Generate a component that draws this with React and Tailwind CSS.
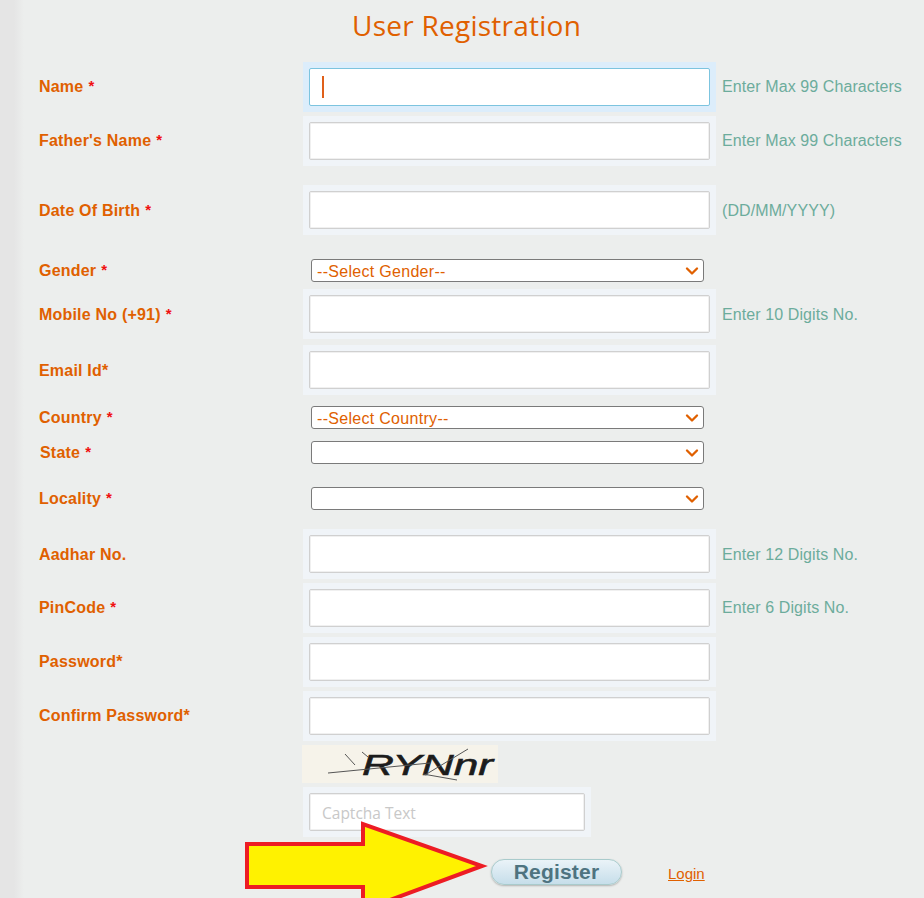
import { useState } from "react";
import { ChevronDown } from "lucide-react";

const arial = "font-['Liberation_Sans',Arial,sans-serif]";

// Label on the left, with the red star where the field is required
const Label = ({ text, star, raw }) => (
  <label className={`w-[279px] shrink-0 pl-[15px] text-[16px] font-bold tracking-[0.2px] text-[#e06000] ${arial} ${raw || ""}`}>
    {text}
    {star && <span className="ml-[5px] text-[15px] align-[1px] text-[#f01010]">*</span>}
  </label>
);

const Field = ({ label, star, hint, mt, focused, low }) => (
  <div className={`flex items-center ${mt || ""}`}>
    <Label text={label} star={star} raw={low ? "pt-[2px]" : ""} />
    <div className={`w-[413px] h-[50px] p-[6px] ${focused ? "bg-[#dcedfb]" : "bg-[#f0f4f8]"}`}>
      <div className="relative h-[38px]">
        <input
          type="text"
          className={`w-full h-full bg-white border rounded-[2px] outline-none ${
            focused
              ? "border-[#7cc4df]"
              : "border-[#d0d0d0] shadow-[inset_0_0_0_1px_#f0f0f0]"
          }`}
        />
        {/* caret of the focused field */}
        {focused && <span className="absolute left-[13px] top-[8px] w-[2px] h-[22px] bg-[#e0601a]" />}
      </div>
    </div>
    {hint && (
      <span className={`ml-[6px] text-[16px] tracking-[0.09px] whitespace-nowrap text-[#6cac9c] ${arial} ${low ? "pt-[2px]" : ""}`}>
        {hint}
      </span>
    )}
  </div>
);

const SelectRow = ({ label, star, placeholder, mt, labelClass }) => (
  <div className={`flex items-center h-[23px] ${mt}`}>
    <Label text={label} star={star} raw={labelClass} />
    <div className="relative ml-[8px] w-[393px] h-[23px]">
      <select
        defaultValue=""
        className={`w-full h-full appearance-none bg-white border border-[#7a7a7a] rounded-[3px] pl-[5px] pb-[1px] text-[16px] tracking-[0.3px] text-[#e06000] ${arial}`}
      >
        <option value="">{placeholder}</option>
      </select>
      <ChevronDown size={20} strokeWidth={2.8} className="absolute right-[2px] top-[2px] text-[#e06000] pointer-events-none" />
    </div>
  </div>
);

const Captcha = () => (
  <svg width="196" height="38" viewBox="0 0 196 38" className="block">
    <rect width="196" height="38" fill="#f6f3ea" />
    <text
      x="60"
      y="30"
      fontFamily="'Liberation Sans', Arial, sans-serif"
      fontSize="30"
      fontStyle="italic"
      textLength="131"
      lengthAdjust="spacingAndGlyphs"
      fill="#1c1c1c"
      stroke="#1c1c1c"
      strokeWidth="0.6"
    >
      RYNnr
    </text>
    <path d="M26 28L128 18M43 9L53 20M60 7L66 12M166 4L123 30M121 29L155 35" stroke="#555" strokeWidth="1" fill="none" />
  </svg>
);

export default function App() {
  const [captcha, setCaptcha] = useState("");

  return (
    <div className="relative flex h-[898px] overflow-hidden bg-[#eceeed]">
      <div className="w-[24px] shrink-0 bg-[linear-gradient(to_right,#e5e5e5_14px,#eceeed_24px)]" />

      <form className="flex-1">
        <h1 className="h-[62px] pl-[328px] pt-[5px] text-[28px] tracking-[0.25px] leading-[40px] whitespace-nowrap text-[#e06000] font-['Open_Sans',sans-serif]">
          User Registration
        </h1>

        <Field label="Name" star hint="Enter Max 99 Characters" focused />
        <Field label="Father's Name" star hint="Enter Max 99 Characters" mt="mt-[4px]" />
        <Field label="Date Of Birth" star hint="(DD/MM/YYYY)" mt="mt-[19px]" low />
        <SelectRow label="Gender" star placeholder="--Select Gender--" mt="mt-[24px]" />
        <Field label="Mobile No (+91)" star hint="Enter 10 Digits No." mt="mt-[7px]" low />
        <Field label="Email Id*" mt="mt-[6px]" low />
        <SelectRow label="Country" star placeholder="--Select Country--" mt="mt-[11px]" />
        <SelectRow label="State" star placeholder="" mt="mt-[12px]" labelClass="pl-[16px]" />
        <SelectRow label="Locality" star placeholder="" mt="mt-[23px]" />
        <Field label="Aadhar No." hint="Enter 12 Digits No." mt="mt-[19px]" low />
        <Field label="PinCode" star hint="Enter 6 Digits No." mt="mt-[4px]" />
        <Field label="Password*" mt="mt-[4px]" />
        <Field label="Confirm Password*" mt="mt-[4px]" />

        <div className="mt-[4px] ml-[278px] w-[196px]">
          <Captcha />
        </div>

        <div className="mt-[4px] ml-[279px] w-[288px] h-[50px] p-[6px] bg-[#f0f4f8]">
          <input
            type="text"
            value={captcha}
            onChange={(e) => setCaptcha(e.target.value)}
            placeholder="Captcha Text"
            className="w-full h-full pl-[12px] pt-[2px] bg-white border border-[#d0d0d0] rounded-[2px] shadow-[inset_0_0_0_1px_#f0f0f0] outline-none text-[15.5px] placeholder:text-[#c8c8c8] font-['Open_Sans',sans-serif]"
          />
        </div>

        <div className="mt-[21px] ml-[467px] flex items-center">
          <button
            type="button"
            className={`w-[131px] h-[26px] rounded-full border border-[#a9cbcc] bg-[linear-gradient(to_bottom,#eaf3f8,#c6deea)] shadow-[0_1px_2px_rgba(0,0,0,0.25)] text-[21px] tracking-[0.2px] leading-[24px] font-bold text-[#4e7380] ${arial}`}
          >
            Register
          </button>
          <a href="#" className={`ml-[46px] mt-[5px] text-[15px] underline text-[#e06000] ${arial}`}>
            Login
          </a>
        </div>
      </form>

      {/* yellow arrow laid over the form, pointing at the button */}
      <svg width="924" height="898" className="absolute left-0 top-0 pointer-events-none">
        <polygon
          points="247,844 363,844 363,824 482,866 363,910 363,887 247,887"
          fill="#fff200"
          stroke="#ed1c24"
          strokeWidth="4"
        />
      </svg>
    </div>
  );
}
